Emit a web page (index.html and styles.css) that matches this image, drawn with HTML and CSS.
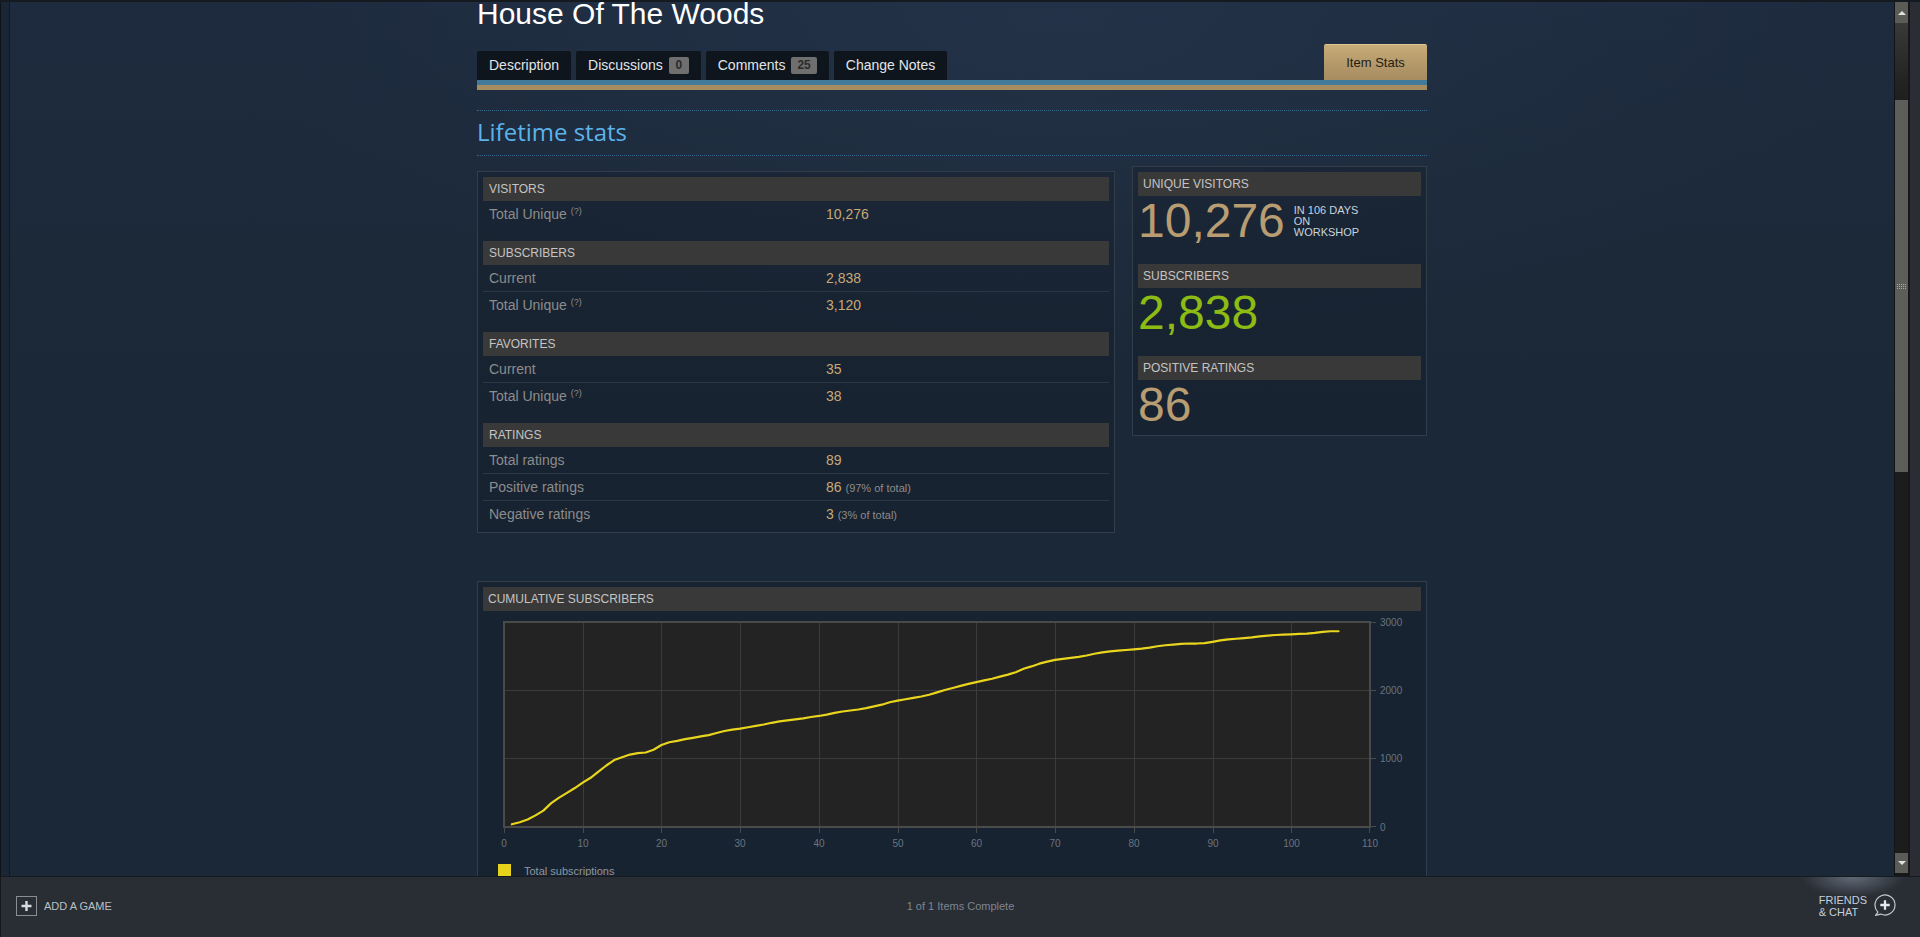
FILE: index.html
```html
<!DOCTYPE html>
<html>
<head>
<meta charset="utf-8">
<title>House Of The Woods - Item Stats</title>
<link rel="stylesheet" href="styles.css">
</head>
<body>
<div class="window">
  <div class="frame-left"></div>
  <div class="webview">
    <div class="page">
      <div class="title">House Of The Woods</div>
      <div class="tabs">
        <div class="tab">Description</div>
        <div class="tab">Discussions <span class="badge">0</span></div>
        <div class="tab">Comments <span class="badge">25</span></div>
        <div class="tab">Change Notes</div>
        <div class="tab tab-active">Item Stats</div>
      </div>
      <div class="tabline"></div>

      <div class="section-title"><h2>Lifetime stats</h2></div>

      <div class="stats-row">
        <div class="stats-table">
          <div class="stat-group">
            <div class="stat-head">Visitors</div>
            <div class="stat-row"><div class="stat-label">Total Unique <sup class="q">(?)</sup></div><div class="stat-value">10,276</div></div>
          </div>
          <div class="stat-group">
            <div class="stat-head">Subscribers</div>
            <div class="stat-row"><div class="stat-label">Current</div><div class="stat-value">2,838</div></div>
            <div class="stat-row"><div class="stat-label">Total Unique <sup class="q">(?)</sup></div><div class="stat-value">3,120</div></div>
          </div>
          <div class="stat-group">
            <div class="stat-head">Favorites</div>
            <div class="stat-row"><div class="stat-label">Current</div><div class="stat-value">35</div></div>
            <div class="stat-row"><div class="stat-label">Total Unique <sup class="q">(?)</sup></div><div class="stat-value">38</div></div>
          </div>
          <div class="stat-group">
            <div class="stat-head">Ratings</div>
            <div class="stat-row"><div class="stat-label">Total ratings</div><div class="stat-value">89</div></div>
            <div class="stat-row"><div class="stat-label">Positive ratings</div><div class="stat-value">86 <span class="pct">(97% of total)</span></div></div>
            <div class="stat-row"><div class="stat-label">Negative ratings</div><div class="stat-value">3 <span class="pct">(3% of total)</span></div></div>
          </div>
        </div>

        <div class="stats-summary">
          <div class="sum-head">Unique Visitors</div>
          <div class="sum-body">
            <div class="big">10,276</div>
            <div class="note">In 106 days<br>on<br>workshop</div>
          </div>
          <div class="sum-head">Subscribers</div>
          <div class="sum-body">
            <div class="big green">2,838</div>
          </div>
          <div class="sum-head">Positive Ratings</div>
          <div class="sum-body">
            <div class="big">86</div>
          </div>
        </div>
      </div>

      <div class="chart-panel">
        <div class="chart-head">Cumulative Subscribers</div>
        <svg class="chart" width="938" height="245" viewBox="0 0 938 245">
          <rect x="21" y="11" width="866" height="205" fill="#232323"/>
          <g stroke="#3b3b3b" stroke-width="1">
            <line x1="100.5" y1="11" x2="100.5" y2="216"/>
            <line x1="178.5" y1="11" x2="178.5" y2="216"/>
            <line x1="257.5" y1="11" x2="257.5" y2="216"/>
            <line x1="336.5" y1="11" x2="336.5" y2="216"/>
            <line x1="415.5" y1="11" x2="415.5" y2="216"/>
            <line x1="493.5" y1="11" x2="493.5" y2="216"/>
            <line x1="572.5" y1="11" x2="572.5" y2="216"/>
            <line x1="651.5" y1="11" x2="651.5" y2="216"/>
            <line x1="730.5" y1="11" x2="730.5" y2="216"/>
            <line x1="808.5" y1="11" x2="808.5" y2="216"/>
            <line x1="21" y1="79.5" x2="887" y2="79.5"/>
            <line x1="21" y1="147.5" x2="887" y2="147.5"/>
          </g>
          <rect x="21" y="11" width="866" height="205" fill="none" stroke="#4a4a4a" stroke-width="2"/>
          <g stroke="#4a4a4a" stroke-width="1">
            <line x1="887" y1="11.5" x2="893" y2="11.5"/>
            <line x1="887" y1="79.5" x2="893" y2="79.5"/>
            <line x1="887" y1="147.5" x2="893" y2="147.5"/>
            <line x1="887" y1="215.5" x2="893" y2="215.5"/>
            <line x1="21.5" y1="216" x2="21.5" y2="222"/>
            <line x1="100.5" y1="216" x2="100.5" y2="222"/>
            <line x1="178.5" y1="216" x2="178.5" y2="222"/>
            <line x1="257.5" y1="216" x2="257.5" y2="222"/>
            <line x1="336.5" y1="216" x2="336.5" y2="222"/>
            <line x1="415.5" y1="216" x2="415.5" y2="222"/>
            <line x1="493.5" y1="216" x2="493.5" y2="222"/>
            <line x1="572.5" y1="216" x2="572.5" y2="222"/>
            <line x1="651.5" y1="216" x2="651.5" y2="222"/>
            <line x1="730.5" y1="216" x2="730.5" y2="222"/>
            <line x1="808.5" y1="216" x2="808.5" y2="222"/>
            <line x1="886.5" y1="216" x2="886.5" y2="222"/>
          </g>
          <g class="axis" text-anchor="start">
            <text x="897" y="15">3000</text>
            <text x="897" y="83">2000</text>
            <text x="897" y="151">1000</text>
            <text x="897" y="219.5">0</text>
          </g>
          <g class="axis" text-anchor="middle">
            <text x="21" y="236">0</text>
            <text x="100" y="236">10</text>
            <text x="178.5" y="236">20</text>
            <text x="257" y="236">30</text>
            <text x="336" y="236">40</text>
            <text x="415" y="236">50</text>
            <text x="493.5" y="236">60</text>
            <text x="572" y="236">70</text>
            <text x="651" y="236">80</text>
            <text x="730" y="236">90</text>
            <text x="808.5" y="236">100</text>
            <text x="887" y="236">110</text>
          </g>
          <g transform="translate(21 216) scale(7.8727 -0.068333)">
            <polyline fill="none" stroke="#ead51e" stroke-width="2.2" stroke-linejoin="round" stroke-linecap="round" vector-effect="non-scaling-stroke"
              points="1,40 2,70 3,110 4,170 5,240 6,350 7,430 8,500 9,570 10,650 11,720 12,810 13,900 14,980 15,1020 16,1060 17,1080 18,1090 19,1130 20,1200 21,1240 22,1260 23,1285 24,1305 25,1325 26,1345 27,1375 28,1405 29,1425 30,1440 31,1460 32,1480 33,1500 34,1525 35,1545 36,1560 37,1575 38,1590 39,1610 40,1625 41,1645 42,1670 43,1690 44,1705 45,1720 46,1740 47,1765 48,1790 49,1825 50,1850 51,1870 52,1890 53,1910 54,1935 55,1970 56,2005 57,2035 58,2065 59,2095 60,2120 61,2145 62,2170 63,2200 64,2230 65,2265 66,2315 67,2350 68,2390 69,2420 70,2445 71,2460 72,2475 73,2490 74,2510 75,2535 76,2555 77,2570 78,2580 79,2590 80,2600 81,2610 82,2625 83,2645 84,2660 85,2670 86,2680 87,2685 88,2685 89,2690 90,2710 91,2730 92,2745 93,2755 94,2765 95,2775 96,2790 97,2800 98,2810 99,2815 100,2820 101,2825 102,2830 103,2840 104,2855 105,2865 106,2865"/>
          </g>
        </svg>
        <div class="legend"><span class="legend-swatch"></span><span>Total subscriptions</span></div>
        <div class="chart-spacer"></div>
      </div>
    </div>
  </div>
  <div class="scrollbar">
    <div class="sb-btn sb-up"><span class="tri-up"></span></div>
    <div class="sb-track-up"></div>
    <div class="sb-thumb">
      <svg width="9" height="5" viewBox="0 0 9 5"><g fill="#a9a9a4"><rect x="0" y="0" width="1" height="1"/><rect x="0" y="2" width="1" height="1"/><rect x="0" y="4" width="1" height="1"/><rect x="2" y="0" width="1" height="1"/><rect x="2" y="2" width="1" height="1"/><rect x="2" y="4" width="1" height="1"/><rect x="4" y="0" width="1" height="1"/><rect x="4" y="2" width="1" height="1"/><rect x="4" y="4" width="1" height="1"/><rect x="6" y="0" width="1" height="1"/><rect x="6" y="2" width="1" height="1"/><rect x="6" y="4" width="1" height="1"/><rect x="8" y="0" width="1" height="1"/><rect x="8" y="2" width="1" height="1"/><rect x="8" y="4" width="1" height="1"/></g></svg>
    </div>
    <div class="sb-track"></div>
    <div class="sb-btn sb-down"><span class="tri-down"></span></div>
  </div>
  <div class="frame-right"></div>
</div>
<div class="bottombar">
  <div class="bb-left">
    <svg class="add-icon" width="21" height="20" viewBox="0 0 21 20"><rect x="0.5" y="0.5" width="20" height="19" fill="none" stroke="#8a8e94"/><path d="M10.5 5v10M5.5 10h10" stroke="#d9dbdd" stroke-width="2.4"/></svg>
    <span>ADD A GAME</span>
  </div>
  <div class="bb-center">1 of 1 Items Complete</div>
  <div class="bb-right">
    <span class="friends-text">FRIENDS<br>&amp; CHAT</span>
    <svg class="friends-icon" width="24" height="24" viewBox="0 0 24 24"><path d="M8.77 20.06A10 10 0 1 0 5.93 18.07L3.6 21.4Z" fill="none" stroke="#c2cad3" stroke-width="1.2" stroke-linejoin="round"/><path d="M13 6.3v9.4M8.3 11h9.4" stroke="#e6e9ec" stroke-width="2.3"/></svg>
  </div>
</div>
</body>
</html>
```

FILE: styles.css
```css
* { box-sizing: border-box; }

html, body { margin: 0; padding: 0; }

body {
  width: 1920px;
  height: 937px;
  overflow: hidden;
  display: flex;
  flex-direction: column;
  background: #1d2229;
  font-family: "Liberation Sans", Arial, Helvetica, sans-serif;
}

/* ---------- window frame ---------- */
.window {
  display: flex;
  height: 876px;
  padding-top: 2px;
  background: #151a20;
}

.frame-left {
  width: 10px;
  background: #1a2535;
  border-left: 1px solid #0f1318;
  border-right: 1px solid #121820;
}

.webview {
  flex: 1;
  overflow: hidden;
  background:
    radial-gradient(ellipse 800px 320px at 1050px 20px, rgba(44, 62, 88, 0.35), rgba(44, 62, 88, 0) 100%),
    linear-gradient(180deg, #1e2b3f 0px, #1c2939 240px, #1b2838 400px, #1b2838 100%);
}

.frame-right {
  width: 10px;
  background: #2a2d33;
}

/* ---------- page ---------- */
.page {
  width: 950px;
  margin: 0 auto;
}

.title {
  margin-top: -3px;
  height: 30px;
  font-size: 30px;
  line-height: 30px;
  color: #ffffff;
  white-space: nowrap;
}

.tabs {
  display: flex;
  align-items: flex-end;
  gap: 5px;
  height: 36px;
  margin-top: 15px;
}

.tab {
  display: flex;
  align-items: center;
  gap: 6px;
  height: 29px;
  padding: 0 12px;
  background: #0f151d;
  border-radius: 2px 2px 0 0;
  color: #e1e5e8;
  font-size: 14px;
  line-height: 29px;
  white-space: nowrap;
}

.badge {
  display: inline-block;
  height: 17px;
  padding: 0 6px;
  min-width: 20px;
  text-align: center;
  background: #6f6f6f;
  border-radius: 2px;
  color: #2b2b2b;
  font-size: 12px;
  font-weight: bold;
  line-height: 17px;
}

.tab-active {
  margin-left: auto;
  width: 103px;
  height: 36px;
  justify-content: center;
  padding: 0;
  background: linear-gradient(180deg, #c9ac79 0%, #b59a6b 50%, #a68c60 100%);
  border-top: 1px solid #e0c68f;
  color: #1f1d19;
  font-size: 13px;
  line-height: 35px;
}

.tabline {
  height: 10px;
  background: linear-gradient(180deg, #427a9c 0, #427a9c 5px, #a58c61 5px, #a58c61 10px);
}

.section-title {
  margin-top: 20px;
  padding: 5px 0 7px;
  border-top: 1px dotted #36668a;
  border-bottom: 1px dotted #36668a;
}

.section-title h2 {
  margin: 0;
  font-family: "Open Sans", "Liberation Sans", sans-serif;
  font-weight: normal;
  font-size: 24px;
  line-height: 32px;
  color: #5cb3ea;
}

/* ---------- stats ---------- */
.stats-row {
  display: flex;
  justify-content: space-between;
  align-items: flex-start;
  margin-top: 10px;
}

.stats-table {
  width: 638px;
  margin-top: 5px;
  padding: 5px;
  border: 1px solid #333d4a;
  background: rgba(14, 18, 26, 0.22);
}

.stat-group { margin-bottom: 14px; }
.stat-group:last-child { margin-bottom: 0; }

.stat-head,
.sum-head,
.chart-head {
  height: 24px;
  line-height: 24px;
  background: #393939;
  color: #c4c4c4;
  font-size: 12px;
  text-transform: uppercase;
  white-space: nowrap;
}

.stat-head { padding-left: 6px; }

.stat-row {
  display: flex;
  align-items: center;
  height: 26px;
  font-size: 14px;
}

.stat-row + .stat-row {
  height: 27px;
  border-top: 1px solid #2d3642;
}

.stat-label {
  width: 343px;
  padding-left: 6px;
  color: #8c8c8c;
  white-space: nowrap;
}

.q {
  font-size: 9px;
  vertical-align: 5px;
  line-height: 0;
  color: #8c8c8c;
}

.stat-value {
  color: #c7a877;
  white-space: nowrap;
}

.pct {
  font-size: 11px;
  color: #8c8c8c;
}

.stats-summary {
  width: 295px;
  padding: 5px;
  border: 1px solid #333d4a;
  background: rgba(14, 18, 26, 0.22);
}

.sum-head { padding-left: 5px; }

.sum-body {
  display: flex;
  align-items: flex-start;
  height: 50px;
  margin-bottom: 18px;
}

.sum-body:last-child { margin-bottom: 0; }

.big {
  font-size: 48px;
  line-height: 50px;
  color: #b89c72;
  white-space: nowrap;
}

.big.green { color: #8cbb14; }

.note {
  margin-left: 9px;
  padding-top: 9px;
  font-size: 11px;
  line-height: 11px;
  color: #c6d4df;
  text-transform: uppercase;
  white-space: nowrap;
}

/* ---------- chart ---------- */
.chart-panel {
  margin-top: 48px;
  padding: 5px;
  border: 1px solid #333d4a;
  background: rgba(14, 18, 26, 0.22);
}

.chart-head { padding-left: 5px; }

.chart {
  display: block;
}

.axis text {
  font-family: "Liberation Sans", Arial, sans-serif;
  font-size: 10px;
  fill: #69747f;
}

.legend {
  display: flex;
  align-items: center;
  gap: 13px;
  margin-top: 8px;
  padding-left: 15px;
  font-size: 11px;
  color: #8f969d;
}

.legend-swatch {
  width: 13px;
  height: 13px;
  background: #e8d31c;
}

.chart-spacer { height: 30px; }

/* ---------- scrollbar ---------- */
.scrollbar {
  width: 16px;
  display: flex;
  flex-direction: column;
  padding-right: 2px;
  border-left: 1px solid #121417;
  background: #171717;
}

.sb-btn {
  display: flex;
  align-items: center;
  justify-content: center;
  background: #5b5b57;
}

.sb-up { height: 21px; }

.sb-down {
  height: 20px;
  margin-bottom: 3px;
}

.tri-up {
  width: 0;
  height: 0;
  border-left: 4px solid transparent;
  border-right: 4px solid transparent;
  border-bottom: 4px solid #e2e2e0;
}

.tri-down {
  width: 0;
  height: 0;
  border-left: 4px solid transparent;
  border-right: 4px solid transparent;
  border-top: 4px solid #e2e2e0;
}

.sb-track-up {
  height: 77px;
  background: linear-gradient(180deg, #393939 0%, #2c2c2c 45%, #222222 80%, #1f1f1f 100%);
}

.sb-thumb {
  height: 372px;
  display: flex;
  align-items: center;
  justify-content: center;
  background: #5d5d59;
}

.sb-track {
  flex: 1;
  background: #1c1c1c;
}

/* ---------- bottom bar ---------- */
.bottombar {
  flex: 1;
  display: grid;
  grid-template-columns: 1fr auto 1fr;
  align-items: center;
  padding-bottom: 3px;
  border-top: 1px solid #16191d;
  border-left: 1px solid #15181c;
  background:
    radial-gradient(ellipse 52px 20px at 1852px 0px, rgba(170, 190, 210, 0.42), rgba(170, 190, 210, 0) 100%),
    #292d34;
}

.bb-left {
  display: flex;
  align-items: center;
  gap: 7px;
  padding-left: 15px;
  color: #bcc0c5;
  font-size: 11px;
}

.add-icon { display: block; }

.bb-center {
  color: #7d8690;
  font-size: 11px;
}

.bb-right {
  display: flex;
  align-items: center;
  justify-content: flex-end;
  gap: 5px;
  padding-right: 24px;
}

.friends-text {
  color: #c5d0da;
  font-size: 11px;
  line-height: 12px;
}

.friends-icon { display: block; }
```
